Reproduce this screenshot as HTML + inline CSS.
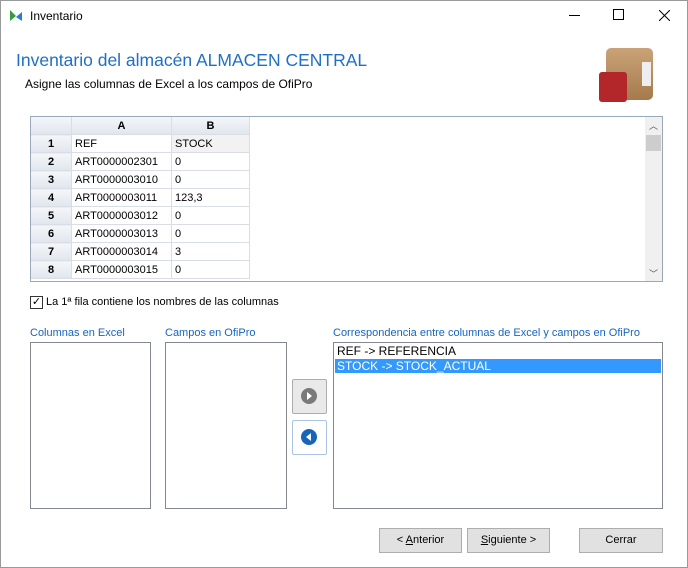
<!DOCTYPE html><html><head><style>
body{margin:0;width:688px;height:568px;overflow:hidden;font-family:"Liberation Sans",sans-serif;font-size:11px;background:#fff;position:relative}
.a{position:absolute}
.win{left:0;top:0;width:686px;height:566px;border:1px solid #9a9a9a}
.grid td{border-right:1px solid #d8dde6;border-bottom:1px solid #d8dde6;height:17px;padding:0 0 0 3px;font-size:11px;white-space:nowrap}
.grid td.h{background:linear-gradient(#f4f6f9,#e1e6ee);font-weight:bold;text-align:center;padding:0}
.lbl{color:#1565c0;font-size:11px}
.box{border:1px solid #828790;background:#fff}
.btn{border:1px solid #adadad;background:#e1e1e1;text-align:center;line-height:22px;font-size:11px}
</style></head><body>
<div class="a win"></div>
<svg class="a" style="left:9px;top:8px" width="14" height="14"><path d="M1 13V2l6 6z" fill="#3b9a3b"/><path d="M13 13V4L7 9z" fill="#2a7bd0"/></svg>
<div class="a" style="left:30px;top:9px;font-size:12px">Inventario</div>
<div class="a" style="left:569px;top:15px;width:11px;height:1px;background:#000"></div>
<div class="a" style="left:613px;top:9px;width:9px;height:9px;border:1px solid #000"></div>
<svg class="a" style="left:659px;top:10px" width="11" height="11"><path d="M0 0L11 11M11 0L0 11" stroke="#000" stroke-width="1"/></svg>
<div class="a" style="left:16px;top:50px;font-size:17.5px;color:#1f6fc6">Inventario del almacén ALMACEN CENTRAL</div>
<div class="a" style="left:25px;top:77px;font-size:12px">Asigne las columnas de Excel a los campos de OfiPro</div>
<div class="a" style="left:606px;top:48px;width:47px;height:52px;background:linear-gradient(#c9a377,#a57a4c);border-radius:5px"></div>
<div class="a" style="left:599px;top:72px;width:28px;height:30px;background:#b3262a;border-radius:3px"></div>
<div class="a" style="left:642px;top:62px;width:9px;height:24px;background:#eee"></div>
<div class="a" style="left:30px;top:116px;width:631px;height:164px;border:1px solid #9aa8bc;overflow:hidden">
<table class="grid" style="border-collapse:collapse;position:absolute;left:0;top:0">
<tr><td class="h" style="width:40px"></td><td class="h" style="width:99px">A</td><td class="h" style="width:77px">B</td></tr>
<tr><td class="h">1</td><td>REF</td><td style="background:#f2f2f2">STOCK</td></tr>
<tr><td class="h">2</td><td>ART0000002301</td><td>0</td></tr>
<tr><td class="h">3</td><td>ART0000003010</td><td>0</td></tr>
<tr><td class="h">4</td><td>ART0000003011</td><td>123,3</td></tr>
<tr><td class="h">5</td><td>ART0000003012</td><td>0</td></tr>
<tr><td class="h">6</td><td>ART0000003013</td><td>0</td></tr>
<tr><td class="h">7</td><td>ART0000003014</td><td>3</td></tr>
<tr><td class="h">8</td><td>ART0000003015</td><td>0</td></tr>
</table>
<div class="a" style="left:614px;top:0;width:17px;height:164px;background:#f0f0f0"></div>
<div class="a" style="left:615px;top:18px;width:15px;height:16px;background:#cdcdcd"></div>
<div class="a" style="left:618px;top:2px;font-size:9px;color:#555">︿</div>
<div class="a" style="left:618px;top:150px;font-size:9px;color:#555">﹀</div>
</div>
<div class="a" style="left:30px;top:296px;width:11px;height:11px;border:1px solid #333;font-size:11px;line-height:11px;text-align:center">✓</div>
<div class="a" style="left:46px;top:296px">La 1ª fila contiene los nombres de las columnas</div>
<div class="a lbl" style="left:30px;top:327px">Columnas en Excel</div>
<div class="a lbl" style="left:165px;top:327px">Campos en OfiPro</div>
<div class="a lbl" style="left:333px;top:327px">Correspondencia entre columnas de Excel y campos en OfiPro</div>
<div class="a box" style="left:30px;top:342px;width:119px;height:165px"></div>
<div class="a box" style="left:165px;top:342px;width:120px;height:165px"></div>
<div class="a box" style="left:333px;top:342px;width:328px;height:165px">
<div style="padding:1px 3px;font-size:12px">REF -&gt; REFERENCIA</div>
<div style="margin:0 1px;padding:0 2px;background:#3399ff;color:#fff;font-size:12px">STOCK -&gt; STOCK_ACTUAL</div></div>
<div class="a" style="left:292px;top:379px;width:33px;height:33px;border:1px solid #adadad;background:#e9e9e9;border-radius:2px"></div>
<svg class="a" style="left:300px;top:387px" width="18" height="18"><circle cx="9" cy="9" r="8" fill="#7a7a7a"/><path d="M7 5l5 4-5 4z" fill="#fff"/></svg>
<div class="a" style="left:292px;top:420px;width:33px;height:33px;border:1px solid #aac4e6;background:#fff;border-radius:2px"></div>
<svg class="a" style="left:300px;top:428px" width="18" height="18"><circle cx="9" cy="9" r="8" fill="#1565b8"/><path d="M11 5L6 9l5 4z" fill="#fff"/></svg>
<div class="a btn" style="left:379px;top:528px;width:81px;height:23px">&lt; <u>A</u>nterior</div>
<div class="a btn" style="left:467px;top:528px;width:81px;height:23px"><u>S</u>iguiente &gt;</div>
<div class="a btn" style="left:579px;top:528px;width:82px;height:23px">Cerrar</div>
</body></html>
